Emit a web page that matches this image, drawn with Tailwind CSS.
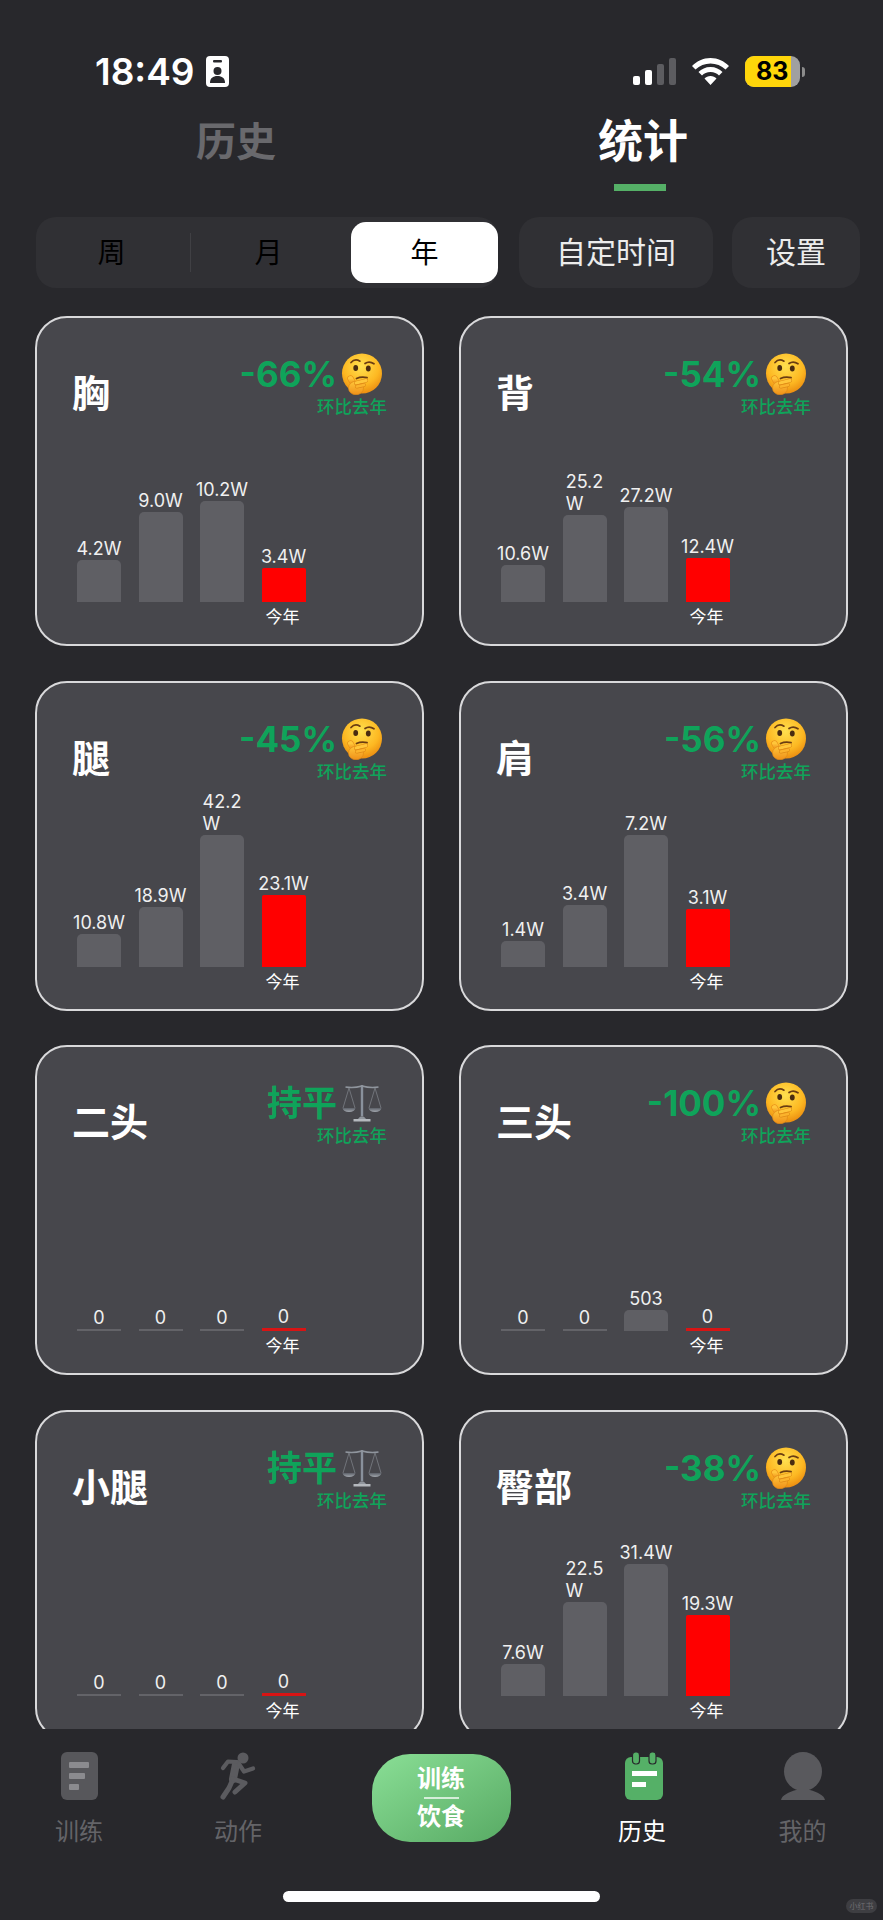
<!doctype html>
<html lang="zh"><head><meta charset="utf-8">
<script src="https://cdn.jsdelivr.net/npm/@tailwindcss/browser@4"></script>
</head>
<body class="bg-[#28282c]">
<svg class="absolute w-0 h-0 overflow-hidden" aria-hidden="true">
  <defs>
    <radialGradient id="gface" cx="48%" cy="32%" r="72%"><stop offset="0" stop-color="#ffe04f"/><stop offset=".62" stop-color="#fdb822"/><stop offset="1" stop-color="#e8860e"/></radialGradient>
    <linearGradient id="ghand" x1="0" y1="0" x2="0" y2="1"><stop offset="0" stop-color="#ffc63a"/><stop offset="1" stop-color="#ef9019"/></linearGradient>
    <linearGradient id="gpan" x1="0" y1="0" x2="0" y2="1"><stop offset="0" stop-color="#5c6068"/><stop offset="1" stop-color="#a3a8af"/></linearGradient>
    <symbol id="think" viewBox="0 0 42 42">
      <circle cx="21" cy="20.500" r="20" fill="url(#gface)"/>
      <path d="M10 9.500c2.500-2.800 6-3 9-1.300" fill="none" stroke="#6b3d12" stroke-width="1.700" stroke-linecap="round"/>
      <path d="M24 10.500c2.500-1.800 6-1.800 9 .3" fill="none" stroke="#6b3d12" stroke-width="1.700" stroke-linecap="round"/>
      <ellipse cx="14.700" cy="15" rx="2.400" ry="3" fill="#4a2c10"/>
      <ellipse cx="27.300" cy="15.500" rx="2.400" ry="3" fill="#4a2c10"/>
      <path d="M15.500 25.500c3-1.300 7-1.600 10.500-.8" fill="none" stroke="#6b3d12" stroke-width="1.800" stroke-linecap="round"/>
      <path d="M9.500 25.500 12.500 31" stroke="#e8901a" stroke-width="6.400" stroke-linecap="round"/>
      <path d="M9.500 25.500 12.500 31" stroke="url(#ghand)" stroke-width="5" stroke-linecap="round"/>
      <ellipse cx="15" cy="35" rx="7.500" ry="6.800" fill="url(#ghand)" stroke="#e08a16" stroke-width=".7"/>
      <path d="M15 30 25 27.500" stroke="#e08a16" stroke-width="4.200" stroke-linecap="round"/>
      <path d="M15 30 25 27.500" stroke="#ffc63a" stroke-width="3" stroke-linecap="round"/>
      <path d="M16 33.500 23 32" stroke="#e08a16" stroke-width="4" stroke-linecap="round"/>
      <path d="M16 33.500 23 32" stroke="#fbb32c" stroke-width="2.800" stroke-linecap="round"/>
    </symbol>
    <symbol id="scale" viewBox="0 0 42 42">
      <path d="M21 3v31" stroke="#89919c" stroke-width="2.400"/>
      <path d="M4.500 5c5 .8 11 .6 16.500-1 5.500 1.600 11.500 1.800 16.500 1" fill="none" stroke="#8f959d" stroke-width="1.600"/>
      <path d="M8 6 2 26M8 6l6 20M34 6l-6 20M34 6l6 20" stroke="#75787f" stroke-width=".9" fill="none"/>
      <path d="M1.500 26h13c-.5 2.700-3 4-6.500 4s-6-1.300-6.500-4zM27.500 26h13c-.5 2.700-3 4-6.500 4s-6-1.300-6.500-4z" fill="url(#gpan)"/>
      <path d="M17 37c1-1.700 2.500-2.800 4-2.800s3 1.100 4 2.800z" fill="#90959c"/>
      <path d="M12.500 37h17v2.500h-17z" fill="#b4b8bd"/>
    </symbol>
  </defs>
</svg>
<div class="w-[883px] h-[1920px] overflow-hidden flex flex-col bg-[#28282c] text-white font-['Inter','Noto_Sans_CJK_SC',sans-serif]">

  <!-- status bar -->
  <div class="h-[116px] shrink-0 pl-[95px] pr-[78px] pt-[56px] flex justify-between items-start">
    <div class="flex items-center gap-[12px] h-[31px]">
      <span class="text-[37px] leading-[31px] font-semibold">18:49</span>
      <svg width="23" height="31" viewBox="0 0 23 31"><rect width="23" height="31" rx="4" fill="#fff"/><rect x="7" y="4" width="9" height="2.500" rx="1" fill="#28282c"/><circle cx="11.500" cy="15" r="4" fill="#28282c"/><path d="M4 27c0-5 3-7 7.500-7s7.500 2 7.500 7z" fill="#28282c"/></svg>
    </div>
    <div class="flex items-center h-[31px]">
      <svg width="43" height="27" viewBox="0 0 43 27" class="mr-[16px]"><rect y="18" width="7" height="9" rx="2" fill="#fff"/><rect x="12" y="12" width="7" height="15" rx="2" fill="#fff"/><rect x="24" y="6" width="7" height="21" rx="2" fill="#5c5c60"/><rect x="36" width="7" height="27" rx="2" fill="#5c5c60"/></svg>
      <svg width="37" height="27" viewBox="0 0 37 27" class="mr-[16px]"><path d="M18.500 0C11 0 5 3 0 8l3.500 3.500C7.500 7.500 13 5.500 18.500 5.500s11 2 15 6L37 8C32 3 26 0 18.500 0zM18.500 9c-5 0-9 2-12 5l3.500 3.500c2-2 5-3.500 8.500-3.500s6.500 1.500 8.500 3.500L30.500 14c-3-3-7-5-12-5zM18.500 18c-2.500 0-4.500 1-6 2.500l6 6.500 6-6.500c-1.500-1.500-3.500-2.500-6-2.500z" fill="#fff"/></svg>
      <div class="w-[55px] h-[31px] rounded-[9px] bg-[#a0a0a0] overflow-hidden flex">
        <div class="w-[46px] h-full pl-[11px] bg-[#ffd60a] flex items-center text-black text-[25px] font-bold">83</div>
      </div>
      <div class="w-[3px] h-[10px] ml-[2px] rounded-r-full bg-[#8c8c8c]"></div>
    </div>
  </div>

  <!-- page tabs -->
  <div class="h-[101px] shrink-0 flex">
    <div class="w-[472px] flex justify-center">
      <span class="text-[40px] leading-[52px] font-bold text-[#69696d]">历史</span>
    </div>
    <div class="w-[342px] flex flex-col items-center">
      <span class="text-[45px] leading-[52px] font-bold">统计</span>
      <div class="w-[52px] h-[7px] mt-[16px] -ml-[6px] bg-[#55b067]"></div>
    </div>
  </div>

  <!-- filter row -->
  <div class="h-[71px] shrink-0 flex pl-[36px] text-[30px] text-[#ececec]">
    <div class="w-[462px] h-[71px] rounded-[20px] bg-[#303034] flex items-center text-[28px]">
      <div class="w-[151px] mr-[3px] text-center text-black">周</div>
      <div class="w-px h-[39px] bg-[#404044]"></div>
      <div class="w-[155px] mr-[5px] text-center text-black">月</div>
      <div class="w-[147px] h-[61px] rounded-[15px] bg-white text-black flex items-center justify-center">年</div>
    </div>
    <div class="w-[194px] h-[71px] ml-[21px] rounded-[20px] bg-[#303034] flex items-center justify-center">自定时间</div>
    <div class="w-[128px] h-[71px] ml-[19px] rounded-[20px] bg-[#303034] flex items-center justify-center">设置</div>
  </div>

  <!-- cards -->
  <main class="mt-[28px] h-[1413px] overflow-hidden pl-[35px]">
    <div class="grid grid-cols-[389px_389px] gap-x-[35px] gap-y-[34.500px] w-[813px]">

      <!-- 胸 -->
      <section class="h-[330px] rounded-[32px] border-2 border-[#d9d9db] bg-[#47474c] relative">
        <div class="absolute left-[35px] top-[50px] text-[38px] leading-[50px] font-bold">胸</div>
        <div class="absolute right-[35px] top-[35px] flex flex-col items-end">
          <div class="flex items-center h-[42px] pr-[4px]"><span class="text-[35px] leading-[42px] font-bold text-[#0fa35a]">-66%</span><svg width="42" height="42" class="ml-[4px]"><use href="#think"/></svg></div>
          <div class="text-[17.500px] leading-[20px] font-medium text-[#0fa35a] mt-[2px]">环比去年</div>
        </div>
        <div class="absolute left-[40px] bottom-[42px] flex items-end gap-[17.500px]">
          <div class="w-[44px] flex flex-col items-center"><div class="text-[18px] leading-[22px] whitespace-nowrap text-[#f0f0f0] -mb-[2px]">4.2W</div><div class="w-[44px] h-[42px] rounded-t-[5px] bg-[#5f5f64] mt-[2px]"></div></div>
          <div class="w-[44px] flex flex-col items-center"><div class="text-[18px] leading-[22px] whitespace-nowrap text-[#f0f0f0] -mb-[2px]">9.0W</div><div class="w-[44px] h-[90px] rounded-t-[5px] bg-[#5f5f64] mt-[2px]"></div></div>
          <div class="w-[44px] flex flex-col items-center"><div class="text-[18px] leading-[22px] whitespace-nowrap text-[#f0f0f0] -mb-[2px]">10.2W</div><div class="w-[44px] h-[101px] rounded-t-[5px] bg-[#5f5f64] mt-[2px]"></div></div>
          <div class="w-[44px] flex flex-col items-center relative"><div class="text-[18px] leading-[22px] whitespace-nowrap text-[#f0f0f0] -mb-[2px]">3.4W</div><div class="w-[44px] h-[34px] rounded-t-[2px] bg-[#ff0000] mt-[2px]"></div><div class="absolute top-full mt-[4px] -ml-[2px] text-[17px] leading-[22px] whitespace-nowrap">今年</div></div>
        </div>
      </section>

      <!-- 背 -->
      <section class="h-[330px] rounded-[32px] border-2 border-[#d9d9db] bg-[#47474c] relative">
        <div class="absolute left-[35px] top-[50px] text-[38px] leading-[50px] font-bold">背</div>
        <div class="absolute right-[35px] top-[35px] flex flex-col items-end">
          <div class="flex items-center h-[42px] pr-[4px]"><span class="text-[35px] leading-[42px] font-bold text-[#0fa35a]">-54%</span><svg width="42" height="42" class="ml-[4px]"><use href="#think"/></svg></div>
          <div class="text-[17.500px] leading-[20px] font-medium text-[#0fa35a] mt-[2px]">环比去年</div>
        </div>
        <div class="absolute left-[40px] bottom-[42px] flex items-end gap-[17.500px]">
          <div class="w-[44px] flex flex-col items-center"><div class="text-[18px] leading-[22px] whitespace-nowrap text-[#f0f0f0] -mb-[2px]">10.6W</div><div class="w-[44px] h-[37px] rounded-t-[5px] bg-[#5f5f64] mt-[2px]"></div></div>
          <div class="w-[44px] flex flex-col items-center"><div class="text-[18px] leading-[22px] whitespace-nowrap text-[#f0f0f0] -mb-[2px]">25.2<br>W</div><div class="w-[44px] h-[87px] rounded-t-[5px] bg-[#5f5f64] mt-[2px]"></div></div>
          <div class="w-[44px] flex flex-col items-center"><div class="text-[18px] leading-[22px] whitespace-nowrap text-[#f0f0f0] -mb-[2px]">27.2W</div><div class="w-[44px] h-[95px] rounded-t-[5px] bg-[#5f5f64] mt-[2px]"></div></div>
          <div class="w-[44px] flex flex-col items-center relative"><div class="text-[18px] leading-[22px] whitespace-nowrap text-[#f0f0f0] -mb-[2px]">12.4W</div><div class="w-[44px] h-[44px] rounded-t-[2px] bg-[#ff0000] mt-[2px]"></div><div class="absolute top-full mt-[4px] -ml-[2px] text-[17px] leading-[22px] whitespace-nowrap">今年</div></div>
        </div>
      </section>

      <!-- 腿 -->
      <section class="h-[330px] rounded-[32px] border-2 border-[#d9d9db] bg-[#47474c] relative">
        <div class="absolute left-[35px] top-[50px] text-[38px] leading-[50px] font-bold">腿</div>
        <div class="absolute right-[35px] top-[35px] flex flex-col items-end">
          <div class="flex items-center h-[42px] pr-[4px]"><span class="text-[35px] leading-[42px] font-bold text-[#0fa35a]">-45%</span><svg width="42" height="42" class="ml-[4px]"><use href="#think"/></svg></div>
          <div class="text-[17.500px] leading-[20px] font-medium text-[#0fa35a] mt-[2px]">环比去年</div>
        </div>
        <div class="absolute left-[40px] bottom-[42px] flex items-end gap-[17.500px]">
          <div class="w-[44px] flex flex-col items-center"><div class="text-[18px] leading-[22px] whitespace-nowrap text-[#f0f0f0] -mb-[2px]">10.8W</div><div class="w-[44px] h-[33px] rounded-t-[5px] bg-[#5f5f64] mt-[2px]"></div></div>
          <div class="w-[44px] flex flex-col items-center"><div class="text-[18px] leading-[22px] whitespace-nowrap text-[#f0f0f0] -mb-[2px]">18.9W</div><div class="w-[44px] h-[60px] rounded-t-[5px] bg-[#5f5f64] mt-[2px]"></div></div>
          <div class="w-[44px] flex flex-col items-center"><div class="text-[18px] leading-[22px] whitespace-nowrap text-[#f0f0f0] -mb-[2px]">42.2<br>W</div><div class="w-[44px] h-[132px] rounded-t-[5px] bg-[#5f5f64] mt-[2px]"></div></div>
          <div class="w-[44px] flex flex-col items-center relative"><div class="text-[18px] leading-[22px] whitespace-nowrap text-[#f0f0f0] -mb-[2px]">23.1W</div><div class="w-[44px] h-[72px] rounded-t-[2px] bg-[#ff0000] mt-[2px]"></div><div class="absolute top-full mt-[4px] -ml-[2px] text-[17px] leading-[22px] whitespace-nowrap">今年</div></div>
        </div>
      </section>

      <!-- 肩 -->
      <section class="h-[330px] rounded-[32px] border-2 border-[#d9d9db] bg-[#47474c] relative">
        <div class="absolute left-[35px] top-[50px] text-[38px] leading-[50px] font-bold">肩</div>
        <div class="absolute right-[35px] top-[35px] flex flex-col items-end">
          <div class="flex items-center h-[42px] pr-[4px]"><span class="text-[35px] leading-[42px] font-bold text-[#0fa35a]">-56%</span><svg width="42" height="42" class="ml-[4px]"><use href="#think"/></svg></div>
          <div class="text-[17.500px] leading-[20px] font-medium text-[#0fa35a] mt-[2px]">环比去年</div>
        </div>
        <div class="absolute left-[40px] bottom-[42px] flex items-end gap-[17.500px]">
          <div class="w-[44px] flex flex-col items-center"><div class="text-[18px] leading-[22px] whitespace-nowrap text-[#f0f0f0] -mb-[2px]">1.4W</div><div class="w-[44px] h-[26px] rounded-t-[5px] bg-[#5f5f64] mt-[2px]"></div></div>
          <div class="w-[44px] flex flex-col items-center"><div class="text-[18px] leading-[22px] whitespace-nowrap text-[#f0f0f0] -mb-[2px]">3.4W</div><div class="w-[44px] h-[62px] rounded-t-[5px] bg-[#5f5f64] mt-[2px]"></div></div>
          <div class="w-[44px] flex flex-col items-center"><div class="text-[18px] leading-[22px] whitespace-nowrap text-[#f0f0f0] -mb-[2px]">7.2W</div><div class="w-[44px] h-[132px] rounded-t-[5px] bg-[#5f5f64] mt-[2px]"></div></div>
          <div class="w-[44px] flex flex-col items-center relative"><div class="text-[18px] leading-[22px] whitespace-nowrap text-[#f0f0f0] -mb-[2px]">3.1W</div><div class="w-[44px] h-[58px] rounded-t-[2px] bg-[#ff0000] mt-[2px]"></div><div class="absolute top-full mt-[4px] -ml-[2px] text-[17px] leading-[22px] whitespace-nowrap">今年</div></div>
        </div>
      </section>

      <!-- 二头 -->
      <section class="h-[330px] rounded-[32px] border-2 border-[#d9d9db] bg-[#47474c] relative">
        <div class="absolute left-[35px] top-[50px] text-[38px] leading-[50px] font-bold">二头</div>
        <div class="absolute right-[35px] top-[35px] flex flex-col items-end">
          <div class="flex items-center h-[42px] pr-[4px]"><span class="text-[35px] leading-[42px] font-bold text-[#0fa35a]">持平</span><svg width="42" height="42" class="ml-[4px]"><use href="#scale"/></svg></div>
          <div class="text-[17.500px] leading-[20px] font-medium text-[#0fa35a] mt-[2px]">环比去年</div>
        </div>
        <div class="absolute left-[40px] bottom-[42px] flex items-end gap-[17.500px]">
          <div class="w-[44px] flex flex-col items-center"><div class="text-[18px] leading-[22px] whitespace-nowrap text-[#f0f0f0]">0</div><div class="w-[44px] h-[2px] bg-[#636368]"></div></div>
          <div class="w-[44px] flex flex-col items-center"><div class="text-[18px] leading-[22px] whitespace-nowrap text-[#f0f0f0]">0</div><div class="w-[44px] h-[2px] bg-[#636368]"></div></div>
          <div class="w-[44px] flex flex-col items-center"><div class="text-[18px] leading-[22px] whitespace-nowrap text-[#f0f0f0]">0</div><div class="w-[44px] h-[2px] bg-[#636368]"></div></div>
          <div class="w-[44px] flex flex-col items-center relative"><div class="text-[18px] leading-[22px] whitespace-nowrap text-[#f0f0f0]">0</div><div class="w-[44px] h-[3px] bg-[#d81414]"></div><div class="absolute top-full mt-[4px] -ml-[2px] text-[17px] leading-[22px] whitespace-nowrap">今年</div></div>
        </div>
      </section>

      <!-- 三头 -->
      <section class="h-[330px] rounded-[32px] border-2 border-[#d9d9db] bg-[#47474c] relative">
        <div class="absolute left-[35px] top-[50px] text-[38px] leading-[50px] font-bold">三头</div>
        <div class="absolute right-[35px] top-[35px] flex flex-col items-end">
          <div class="flex items-center h-[42px] pr-[4px]"><span class="text-[35px] leading-[42px] font-bold text-[#0fa35a]">-100%</span><svg width="42" height="42" class="ml-[4px]"><use href="#think"/></svg></div>
          <div class="text-[17.500px] leading-[20px] font-medium text-[#0fa35a] mt-[2px]">环比去年</div>
        </div>
        <div class="absolute left-[40px] bottom-[42px] flex items-end gap-[17.500px]">
          <div class="w-[44px] flex flex-col items-center"><div class="text-[18px] leading-[22px] whitespace-nowrap text-[#f0f0f0]">0</div><div class="w-[44px] h-[2px] bg-[#636368]"></div></div>
          <div class="w-[44px] flex flex-col items-center"><div class="text-[18px] leading-[22px] whitespace-nowrap text-[#f0f0f0]">0</div><div class="w-[44px] h-[2px] bg-[#636368]"></div></div>
          <div class="w-[44px] flex flex-col items-center"><div class="text-[18px] leading-[22px] whitespace-nowrap text-[#f0f0f0]">503</div><div class="w-[44px] h-[21px] rounded-t-[5px] bg-[#5f5f64]"></div></div>
          <div class="w-[44px] flex flex-col items-center relative"><div class="text-[18px] leading-[22px] whitespace-nowrap text-[#f0f0f0]">0</div><div class="w-[44px] h-[3px] bg-[#d81414]"></div><div class="absolute top-full mt-[4px] -ml-[2px] text-[17px] leading-[22px] whitespace-nowrap">今年</div></div>
        </div>
      </section>

      <!-- 小腿 -->
      <section class="h-[330px] rounded-[32px] border-2 border-[#d9d9db] bg-[#47474c] relative">
        <div class="absolute left-[35px] top-[50px] text-[38px] leading-[50px] font-bold">小腿</div>
        <div class="absolute right-[35px] top-[35px] flex flex-col items-end">
          <div class="flex items-center h-[42px] pr-[4px]"><span class="text-[35px] leading-[42px] font-bold text-[#0fa35a]">持平</span><svg width="42" height="42" class="ml-[4px]"><use href="#scale"/></svg></div>
          <div class="text-[17.500px] leading-[20px] font-medium text-[#0fa35a] mt-[2px]">环比去年</div>
        </div>
        <div class="absolute left-[40px] bottom-[42px] flex items-end gap-[17.500px]">
          <div class="w-[44px] flex flex-col items-center"><div class="text-[18px] leading-[22px] whitespace-nowrap text-[#f0f0f0]">0</div><div class="w-[44px] h-[2px] bg-[#636368]"></div></div>
          <div class="w-[44px] flex flex-col items-center"><div class="text-[18px] leading-[22px] whitespace-nowrap text-[#f0f0f0]">0</div><div class="w-[44px] h-[2px] bg-[#636368]"></div></div>
          <div class="w-[44px] flex flex-col items-center"><div class="text-[18px] leading-[22px] whitespace-nowrap text-[#f0f0f0]">0</div><div class="w-[44px] h-[2px] bg-[#636368]"></div></div>
          <div class="w-[44px] flex flex-col items-center relative"><div class="text-[18px] leading-[22px] whitespace-nowrap text-[#f0f0f0]">0</div><div class="w-[44px] h-[3px] bg-[#d81414]"></div><div class="absolute top-full mt-[4px] -ml-[2px] text-[17px] leading-[22px] whitespace-nowrap">今年</div></div>
        </div>
      </section>

      <!-- 臀部 -->
      <section class="h-[330px] rounded-[32px] border-2 border-[#d9d9db] bg-[#47474c] relative">
        <div class="absolute left-[35px] top-[50px] text-[38px] leading-[50px] font-bold">臀部</div>
        <div class="absolute right-[35px] top-[35px] flex flex-col items-end">
          <div class="flex items-center h-[42px] pr-[4px]"><span class="text-[35px] leading-[42px] font-bold text-[#0fa35a]">-38%</span><svg width="42" height="42" class="ml-[4px]"><use href="#think"/></svg></div>
          <div class="text-[17.500px] leading-[20px] font-medium text-[#0fa35a] mt-[2px]">环比去年</div>
        </div>
        <div class="absolute left-[40px] bottom-[42px] flex items-end gap-[17.500px]">
          <div class="w-[44px] flex flex-col items-center"><div class="text-[18px] leading-[22px] whitespace-nowrap text-[#f0f0f0] -mb-[2px]">7.6W</div><div class="w-[44px] h-[32px] rounded-t-[5px] bg-[#5f5f64] mt-[2px]"></div></div>
          <div class="w-[44px] flex flex-col items-center"><div class="text-[18px] leading-[22px] whitespace-nowrap text-[#f0f0f0] -mb-[2px]">22.5<br>W</div><div class="w-[44px] h-[94px] rounded-t-[5px] bg-[#5f5f64] mt-[2px]"></div></div>
          <div class="w-[44px] flex flex-col items-center"><div class="text-[18px] leading-[22px] whitespace-nowrap text-[#f0f0f0] -mb-[2px]">31.4W</div><div class="w-[44px] h-[132px] rounded-t-[5px] bg-[#5f5f64] mt-[2px]"></div></div>
          <div class="w-[44px] flex flex-col items-center relative"><div class="text-[18px] leading-[22px] whitespace-nowrap text-[#f0f0f0] -mb-[2px]">19.3W</div><div class="w-[44px] h-[81px] rounded-t-[2px] bg-[#ff0000] mt-[2px]"></div><div class="absolute top-full mt-[4px] -ml-[2px] text-[17px] leading-[22px] whitespace-nowrap">今年</div></div>
        </div>
      </section>
    </div>
  </main>

  <!-- bottom nav -->
  <nav class="h-[191px] shrink-0 bg-[#28282c] relative">
    <div class="grid grid-cols-[158px_160px_246px_156px_165px] pt-[23px] text-[24px]">
      <div class="flex flex-col items-center text-[#646468]">
        <svg width="37" height="48" viewBox="0 0 37 48"><rect width="37" height="48" rx="6" fill="#57575b"/><rect x="8" y="10" width="20" height="6" rx="1" fill="#8b8b8f"/><rect x="8" y="21" width="16" height="6" rx="1" fill="#8b8b8f"/><rect x="8" y="32" width="10" height="6" rx="1" fill="#8b8b8f"/></svg>
        <span class="mt-[17px] leading-[30px]">训练</span>
      </div>
      <div class="flex flex-col items-center text-[#646468]">
        <svg width="36" height="48" viewBox="0 0 36 48" fill="none" stroke="#5b5b5f" stroke-linecap="round" stroke-linejoin="round"><circle cx="23" cy="6" r="5.500" fill="#5b5b5f" stroke="none"/><path d="M16 12 13 27" stroke-width="8"/><path d="M17 10 8 9.500 3 16" stroke-width="4.200"/><path d="M19 12 24 19.500 33 16.500" stroke-width="4.200"/><path d="M13 27 9 36 3 45" stroke-width="5"/><path d="M13 27 25 31 15 40" stroke-width="5"/></svg>
        <span class="mt-[17px] leading-[30px]">动作</span>
      </div>
      <div class="flex justify-center mt-[2px]">
        <div class="w-[139px] h-[88px] rounded-[38px] bg-gradient-to-br from-[#8adf96] to-[#58aa64] flex flex-col items-center justify-center font-bold text-[24px] leading-[30px]">
          <span>训练</span>
          <div class="w-[35px] h-[2px] my-[3px] bg-white/70"></div>
          <span>饮食</span>
        </div>
      </div>
      <div class="flex flex-col items-center text-white">
        <svg width="38" height="48" viewBox="0 0 38 48" class="ml-[4px]"><rect y="5" width="38" height="43" rx="6" fill="#55b067"/><rect x="7.500" y="0" width="7" height="12" rx="3" fill="#55b067" stroke="#28282c" stroke-width="1.200"/><rect x="24" y="0" width="7" height="12" rx="3" fill="#55b067" stroke="#28282c" stroke-width="1.200"/><rect x="7" y="19" width="25" height="5" fill="#fff"/><rect x="7" y="30" width="14" height="5" fill="#fff"/></svg>
        <span class="mt-[17px] leading-[30px]">历史</span>
      </div>
      <div class="flex flex-col items-center text-[#646468]">
        <svg width="44" height="48" viewBox="0 0 44 48" fill="#59595d"><ellipse cx="22" cy="19.500" rx="19" ry="19.500"/><path d="M0 48c1-5 8-8 15-10h14c7 2 14 5 15 10z"/></svg>
        <span class="mt-[17px] leading-[30px]">我的</span>
      </div>
    </div>
    <div class="absolute left-[283px] top-[162px] w-[317px] h-[11px] rounded-full bg-white"></div>
    <div class="absolute left-[846px] top-[170px] w-[31px] h-[14px] rounded-full bg-[#3e3e42] flex items-center justify-center text-[8px] leading-none text-[#6e6e72]">小红书</div>
  </nav>
</div>
</body></html>
